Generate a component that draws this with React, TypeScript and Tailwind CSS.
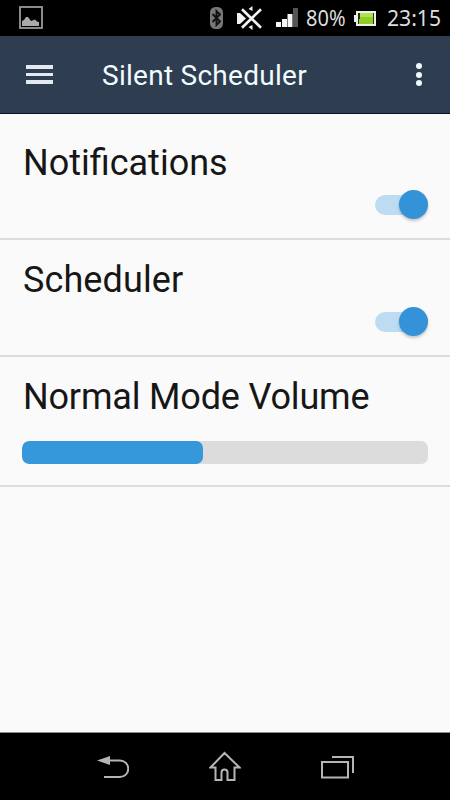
import { useState, type ReactNode } from "react";

function StatusBar() {
   return (
      <div className="flex h-9 items-center bg-black font-['Noto_Sans',sans-serif] text-[22px] leading-[34px] text-[#dedede]">
         <svg className="ml-[19px] h-6 w-6" viewBox="0 0 24 24" fill="none">
            <rect x="1" y="1" width="22" height="21" stroke="#999" strokeWidth="1.8" />
            <path d="M3 20v-5l2-1 2-3h2l3 4 4-1.500 2 2 2 .5v4z" fill="#aaa" />
         </svg>

         <svg className="ml-[167px] h-6 w-[13px]" viewBox="0 0 13 24" fill="none">
            <rect width="13" height="22" y="1" rx="5.5" fill="#777" />
            <path d="M2.500 8l7.500 7.500-3.500 3.500V5l3.500 3.500-7.500 7.500" stroke="#101010" strokeWidth="1.9" />
         </svg>

         <svg className="ml-[14px] h-6 w-[26px]" viewBox="0 0 26 24" fill="none" stroke="#f2f2f2">
            <path d="M0 7h3l6 5.500-6 5.500H0z" fill="#f2f2f2" stroke="none" />
            <path d="M5 3.200l19 18.500M24 3.200l-19 18.500" strokeWidth="2.6" />
            <path d="M15.500 0v5l-4-2zM15.500 24v-5l-4 2z" fill="#f2f2f2" stroke="none" />
         </svg>

         <svg className="ml-[13px] h-5 w-[22px]" viewBox="0 0 22 20">
            <path d="M0 14h5v5H0zM6 11h5v8H6zM11.500 6h5v13h-5z" fill="#f5f5f5" />
            <path d="M17 0h5v19h-5z" fill="#555" />
         </svg>

         <span className="ml-2 w-[39px] origin-left -translate-y-px scale-x-[0.91] whitespace-nowrap">80%</span>

         <svg className="ml-[9px] h-[17px] w-[22px]" viewBox="0 0 22 17">
            <path d="M0 5h2V1h20v15H2v-4H0z" fill="#eee" />
            <path d="M4 3h16v11H4z" fill="#26310f" />
            <path d="M6 3h13v11H5V9h1z" fill="#8fcf24" />
            <path d="M6 3h13v4H6z" fill="#b2df55" />
         </svg>

         <span className="ml-[11px] origin-left -translate-y-px scale-x-[0.96] whitespace-nowrap">23:15</span>
      </div>
   );
}

function Header() {
   return (
      <header className="flex h-[78px] items-center border-b border-[#081225] bg-[#2e3e50]">
         <button className="ml-[26px] flex w-[27px] flex-col gap-[4px]">
            <span className="h-[4px] w-full bg-[#e2e9ef]" />
            <span className="h-[3px] w-full bg-[#e2e9ef]" />
            <span className="h-[4px] w-full bg-[#e2e9ef]" />
         </button>
         <h1 className="ml-[49px] flex-1 whitespace-nowrap pt-[3px] text-[28px] leading-8 tracking-[0.27px] text-[#f2fbff]">
            Silent Scheduler
         </h1>
         <button className="mr-[28px] flex flex-col gap-[2.5px]">
            <span className="size-1.5 rounded-full bg-[#f0faff]" />
            <span className="size-1.5 rounded-full bg-[#f0faff]" />
            <span className="size-1.5 rounded-full bg-[#f0faff]" />
         </button>
      </header>
   );
}

function Toggle({ on, onToggle }: { on: boolean; onToggle: () => void; }) {
   return (
      <button onClick={onToggle} className="relative flex h-[29px] w-[53px] items-center">
         <span className="h-5 w-full rounded-full bg-[#bedcf1]" />
         <span
            className={`absolute top-0 size-[29px] rounded-full shadow-[0_2px_3px_rgba(0,0,0,0.22)] ${on ? "right-0 bg-[#3493d8]" : "left-0 bg-white"}`}
         />
      </button>
   );
}

function Row({ title, titleClass = "", children }: { title: string; titleClass?: string; children: ReactNode; }) {
   return (
      <section className="border-b-2 border-[#dcdcdc] px-[22px]">
         <h2 className={`whitespace-nowrap pl-px pt-[19px] text-[36px] leading-[42px] text-[#161616] ${titleClass}`}>{title}</h2>
         {children}
      </section>
   );
}

export default function App() {
   const [notifications, setNotifications] = useState(true);
   const [scheduler, setScheduler] = useState(true);
   const volume = 44.5;

   return (
      <div className="flex h-[800px] w-[450px] flex-col overflow-hidden bg-[#fafafa] font-[Roboto,sans-serif]">
         <StatusBar />
         <Header />

         <main className="flex-1 pt-[9px]">
            <Row title="Notifications">
               <div className="flex h-[54px] justify-end pt-[6px]">
                  <Toggle on={notifications} onToggle={() => setNotifications(!notifications)} />
               </div>
            </Row>
            <Row title="Scheduler" titleClass="tracking-[0.1px]">
               <div className="flex h-[54px] justify-end pt-[6px]">
                  <Toggle on={scheduler} onToggle={() => setScheduler(!scheduler)} />
               </div>
            </Row>
            <Row title="Normal Mode Volume" titleClass="tracking-[-0.17px]">
               <div className="h-[67px] pt-[23px]">
                  <div className="h-[23px] overflow-hidden rounded-[7px] bg-[#dcdcdc]">
                     <div className="h-full rounded-[7px] bg-[#3498db]" style={{ width: `${volume}%` }} />
                  </div>
               </div>
            </Row>
         </main>

         <nav className="flex h-[68px] items-center justify-between border-t border-[#8a8a8a] bg-black pl-[97px] pr-[96px]">
            <svg className="h-6 w-8" viewBox="0 0 32 24" fill="none" stroke="#b5b5b5" strokeWidth="2">
               <path d="M12 5.500h11a8.200 8.200 0 0 1 0 16.500H7" />
               <path d="M0 5.500L13 1v9z" fill="#b5b5b5" stroke="none" />
            </svg>
            <svg className="h-8 w-8" viewBox="0 0 32 32" fill="none" stroke="#b5b5b5" strokeWidth="2">
               <path d="M15.500 2L1.500 16.500H6.500V29h6V21.500a3 3 0 0 1 6 0V29h7V16.500h5z" />
            </svg>
            <svg className="h-6 w-[33px]" viewBox="0 0 33 24" fill="none" stroke="#b5b5b5" strokeWidth="2">
               <rect x="1" y="7" width="26" height="15.500" />
               <path d="M11 2h21v16" />
            </svg>
         </nav>
      </div>
   );
}
